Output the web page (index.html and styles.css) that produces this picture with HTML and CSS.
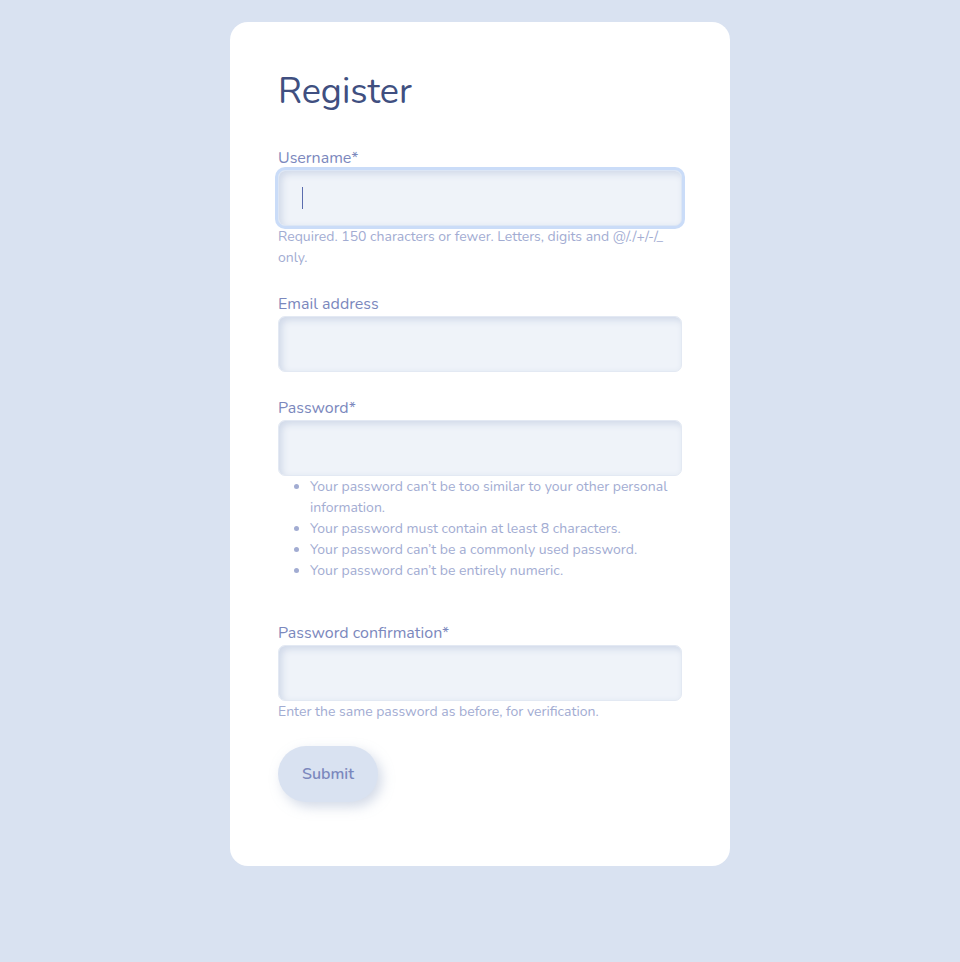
FILE: index.html
```html
<!DOCTYPE html>
<html lang="en">
<head>
  <meta charset="UTF-8">
  <meta name="viewport" content="width=device-width, initial-scale=1.0">
  <title>Register</title>
  <link rel="stylesheet" href="styles.css">
</head>
<body>
  <div class="card">
    <h1>Register</h1>
    <form class="register-form" onsubmit="return false;">
      <div class="field">
        <label for="id_username">Username*</label>
        <div class="input-wrap">
          <input type="text" id="id_username" class="focused">
          <span class="caret"></span>
        </div>
        <span class="helptext">Required. 150 characters or fewer. Letters, digits and @/./+/-/_ only.</span>
      </div>
      <div class="field">
        <label for="id_email">Email address</label>
        <input type="email" id="id_email">
      </div>
      <div class="field">
        <label for="id_password1">Password*</label>
        <input type="password" id="id_password1">
        <ul class="helplist">
          <li>Your password can’t be too similar to your other personal information.</li>
          <li>Your password must contain at least 8 characters.</li>
          <li>Your password can’t be a commonly used password.</li>
          <li>Your password can’t be entirely numeric.</li>
        </ul>
      </div>
      <div class="field">
        <label for="id_password2">Password confirmation*</label>
        <input type="password" id="id_password2">
        <span class="helptext">Enter the same password as before, for verification.</span>
      </div>
      <button type="submit">Submit</button>
    </form>
  </div>
</body>
</html>
```

FILE: styles.css
```css
body {
  margin: 0;
  padding: 22px 0 96px;
  background-color: #d9e2f1;
  font-family: "Nunito", "Lato", "Noto Sans", sans-serif;
  color: #7b88bd;
}
.card {
  width: 404px;
  margin: 0 auto;
  padding: 48px 48px 64px;
  background: #fff;
  border-radius: 18px;
}
h1 {
  margin: 0 0 31px;
  font-size: 36px;
  line-height: 44px;
  font-weight: 400;
  color: #404f80;
}
.field {
  display: flex;
  flex-direction: column;
  margin-bottom: 23px;
}
label {
  font-size: 16px;
  line-height: 26px;
  margin-bottom: -1px;
}
input {
  box-sizing: border-box;
  width: 404px;
  height: 56px;
  padding: 0 24px;
  border: 1px solid #e3e9f3;
  border-radius: 7px;
  background-color: #eff3f9;
  box-shadow: inset 3px 3px 7px #d0d9e9;
  font-family: inherit;
  font-size: 16px;
  color: #404f80;
  outline: none;
}
input.focused {
  border-color: #dce6f5;
  box-shadow: 0 0 0 3px #cadcf8, inset 3px 3px 7px #d0d9e9;
}
.input-wrap {
  position: relative;
}
.caret {
  position: absolute;
  left: 24px;
  top: 17px;
  width: 1px;
  height: 22px;
  background: #5a6cae;
}
.helptext {
  font-size: 14px;
  line-height: 21px;
  color: #a2acd2;
}
.helplist {
  margin: 0 0 16px;
  padding-left: 32px;
  font-size: 14px;
  line-height: 21px;
  color: #a2acd2;
}
button {
  margin-top: 1px;
  height: 56px;
  padding: 0 24px;
  border: none;
  border-radius: 28px;
  background-color: #d9e2f1;
  box-shadow: 4px 5px 12px rgba(170, 183, 210, 0.5);
  font-family: inherit;
  font-size: 16px;
  font-weight: 600;
  color: #7b88bd;
  cursor: pointer;
}
```
